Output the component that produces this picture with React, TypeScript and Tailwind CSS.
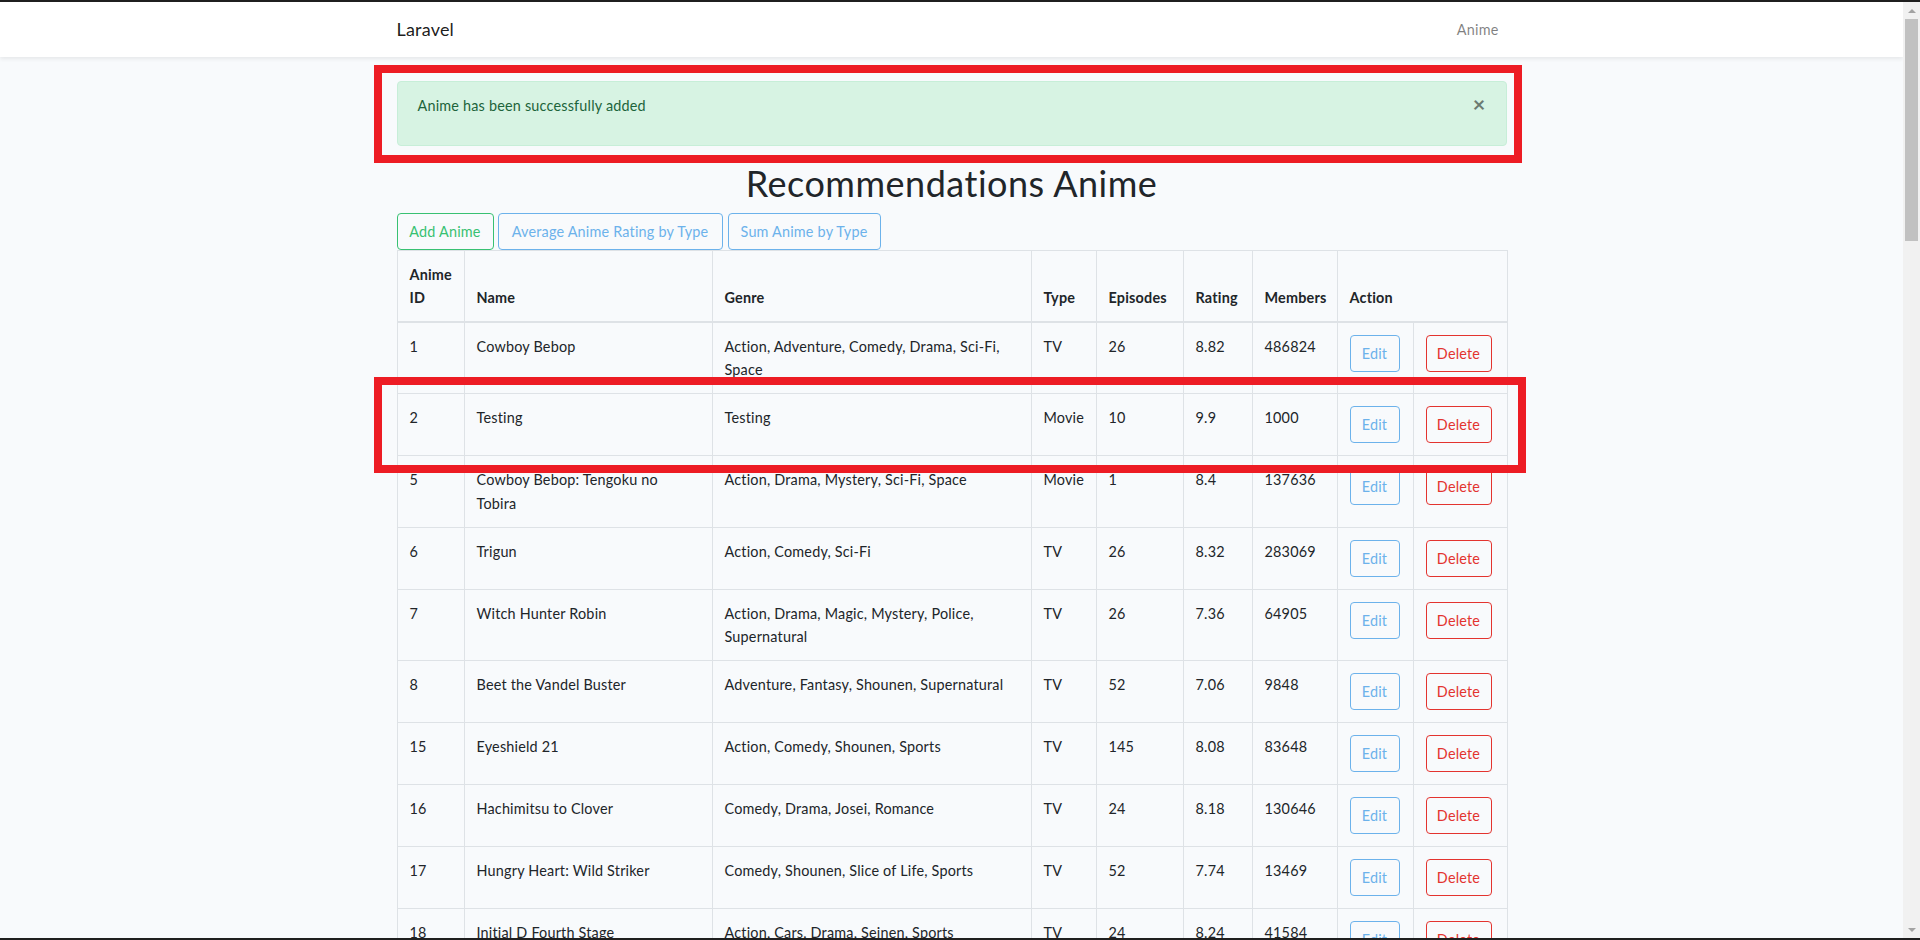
import React from 'react';

type Anime = {
  id: number;
  name: string;
  genre: string;
  type: string;
  episodes: number;
  rating: string;
  members: number;
};

// names carry a manual line break where the original layout wrapped
const animes: Anime[] = [
  { id: 1, name: 'Cowboy Bebop', genre: 'Action, Adventure, Comedy, Drama, Sci-Fi, Space', type: 'TV', episodes: 26, rating: '8.82', members: 486824 },
  { id: 2, name: 'Testing', genre: 'Testing', type: 'Movie', episodes: 10, rating: '9.9', members: 1000 },
  { id: 5, name: 'Cowboy Bebop: Tengoku no\nTobira', genre: 'Action, Drama, Mystery, Sci-Fi, Space', type: 'Movie', episodes: 1, rating: '8.4', members: 137636 },
  { id: 6, name: 'Trigun', genre: 'Action, Comedy, Sci-Fi', type: 'TV', episodes: 26, rating: '8.32', members: 283069 },
  { id: 7, name: 'Witch Hunter Robin', genre: 'Action, Drama, Magic, Mystery, Police, Supernatural', type: 'TV', episodes: 26, rating: '7.36', members: 64905 },
  { id: 8, name: 'Beet the Vandel Buster', genre: 'Adventure, Fantasy, Shounen, Supernatural', type: 'TV', episodes: 52, rating: '7.06', members: 9848 },
  { id: 15, name: 'Eyeshield 21', genre: 'Action, Comedy, Shounen, Sports', type: 'TV', episodes: 145, rating: '8.08', members: 83648 },
  { id: 16, name: 'Hachimitsu to Clover', genre: 'Comedy, Drama, Josei, Romance', type: 'TV', episodes: 24, rating: '8.18', members: 130646 },
  { id: 17, name: 'Hungry Heart: Wild Striker', genre: 'Comedy, Shounen, Slice of Life, Sports', type: 'TV', episodes: 52, rating: '7.74', members: 13469 },
  { id: 18, name: 'Initial D Fourth Stage', genre: 'Action, Cars, Drama, Seinen, Sports', type: 'TV', episodes: 24, rating: '8.24', members: 41584 },
  { id: 19, name: 'Monster', genre: 'Drama, Horror, Mystery, Police, Psychological, Seinen, Thriller', type: 'TV', episodes: 74, rating: '8.72', members: 247562 },
];

const cellClass = 'border border-[#dee2e6] p-3 align-top whitespace-pre-line';
const headClass = 'border border-[#dee2e6] border-b-2 p-3 align-bottom text-left font-bold';

function Scrollbar() {
  return (
    <div className="w-[17px] bg-[#f1f1f1] flex flex-col items-center">
      <div className="h-[17px] flex items-center justify-center">
        <div className="w-0 h-0 border-l-[4px] border-r-[4px] border-b-[4px] border-l-transparent border-r-transparent border-b-[#a3a3a3]" />
      </div>
      <div className="w-[13px] h-[222px] bg-[#c1c1c1]" />
      <div className="flex-1" />
      <div className="h-[17px] flex items-center justify-center">
        <div className="w-0 h-0 border-l-[4px] border-r-[4px] border-t-[4px] border-l-transparent border-r-transparent border-t-[#a3a3a3]" />
      </div>
    </div>
  );
}

export default function App() {
  return (
    <div className="relative w-[1920px] h-[940px] overflow-hidden flex flex-col bg-[#1f1f1f] font-['Lato',sans-serif] text-[14.4px] leading-[1.6] tracking-[0.2px] text-[#212529]">
      <div className="h-[2px] bg-[#1f1f1f]" />
      <div className="flex flex-1 min-h-0">
        <div className="w-[1903px] bg-[#f8fafc] overflow-hidden">
          {/* Navbar */}
          <nav className="bg-white shadow-[0_2px_4px_rgba(0,0,0,0.075)] py-2 relative z-10">
            <div className="w-[1140px] mx-auto px-[15px] flex items-center justify-between">
              <span className="text-[18px] leading-[1.6] py-[5px] text-[rgba(0,0,0,0.9)]">Laravel</span>
              <span className="px-2 py-2 text-[rgba(0,0,0,0.5)]">Anime</span>
            </div>
          </nav>

          <main className="py-6">
            <div className="w-[1140px] mx-auto px-[15px]">
              {/* Alert */}
              <div className="relative mb-4 rounded border border-[#c7eed8] bg-[#d7f3e3] text-[#1d643b] pl-5 pr-16 py-3">
                <p className="mb-4">Anime has been successfully added</p>
                <span className="absolute top-0 right-0 px-5 py-3 text-[21.6px] leading-none font-bold text-black opacity-50">×</span>
              </div>

              <h1 className="text-center text-[36px] leading-[1.2] font-normal tracking-[0.5px] mb-2">Recommendations Anime</h1>

              <div className="flex">
                <button className="w-[97px] h-[37px] rounded border border-[#38c172] text-[#38c172]">Add Anime</button>
                <button className="ml-[4px] w-[225px] h-[37px] rounded border border-[#6cb2eb] text-[#6cb2eb]">Average Anime Rating by Type</button>
                <button className="ml-[5px] w-[153px] h-[37px] rounded border border-[#6cb2eb] text-[#6cb2eb]">Sum Anime by Type</button>
              </div>

              <table className="w-[1110px] table-fixed border-collapse">
                <colgroup>
                  <col className="w-[67px]" />
                  <col className="w-[248px]" />
                  <col className="w-[319px]" />
                  <col className="w-[65px]" />
                  <col className="w-[87px]" />
                  <col className="w-[69px]" />
                  <col className="w-[85px]" />
                  <col className="w-[76px]" />
                  <col className="w-[94px]" />
                </colgroup>
                <thead>
                  <tr>
                    <th className={headClass}>Anime ID</th>
                    <th className={headClass}>Name</th>
                    <th className={headClass}>Genre</th>
                    <th className={headClass}>Type</th>
                    <th className={headClass}>Episodes</th>
                    <th className={headClass}>Rating</th>
                    <th className={headClass}>Members</th>
                    <th className={headClass} colSpan={2}>Action</th>
                  </tr>
                </thead>
                <tbody>
                  {animes.map((a) => (
                    <tr key={a.id}>
                      <td className={cellClass}>{a.id}</td>
                      <td className={cellClass}>{a.name}</td>
                      <td className={cellClass}>{a.genre}</td>
                      <td className={cellClass}>{a.type}</td>
                      <td className={cellClass}>{a.episodes}</td>
                      <td className={cellClass}>{a.rating}</td>
                      <td className={cellClass}>{a.members}</td>
                      <td className={cellClass}>
                        <button className="w-[50px] h-[37px] rounded border border-[#6cb2eb] text-[#6cb2eb]">Edit</button>
                      </td>
                      <td className={cellClass}>
                        <button className="w-[66px] h-[37px] rounded border border-[#e3342f] text-[#e3342f]">Delete</button>
                      </td>
                    </tr>
                  ))}
                </tbody>
              </table>
            </div>
          </main>
        </div>
        <Scrollbar />
      </div>
      <div className="h-[2px] bg-[#1f1f1f]" />

      {/* red annotation boxes */}
      <div className="absolute left-[374px] top-[65px] w-[1148px] h-[98px] border-[8px] border-[#ed1c24] pointer-events-none" />
      <div className="absolute left-[374px] top-[377px] w-[1152px] h-[96px] border-[8px] border-[#ed1c24] pointer-events-none" />
    </div>
  );
}
